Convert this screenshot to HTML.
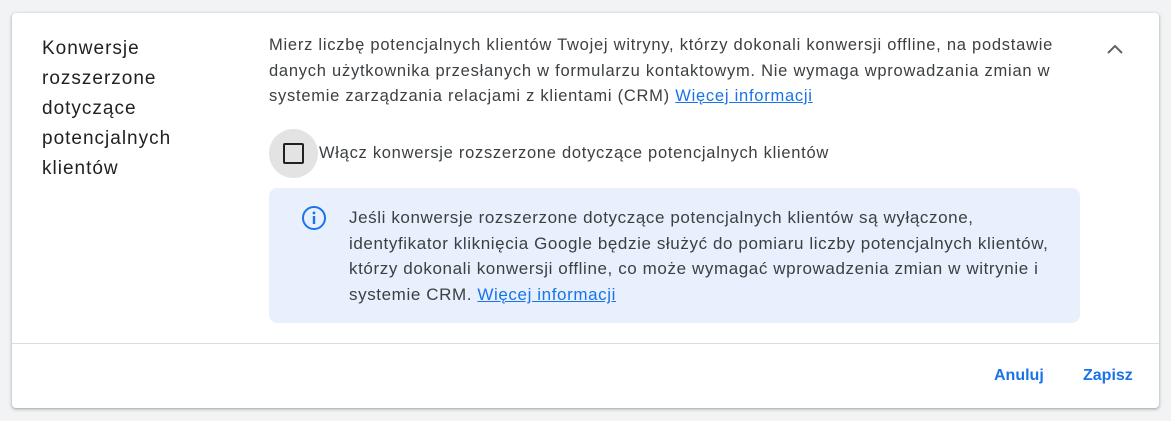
<!DOCTYPE html>
<html><head><meta charset="utf-8"><style>
body{margin:0;width:1171px;height:421px;background:#f1f3f4;font-family:"Liberation Sans",Arial,sans-serif;position:relative;overflow:hidden}
.card{position:absolute;left:12px;top:13px;width:1147px;height:395px;background:#fff;border-radius:4px;box-shadow:0 1px 2px rgba(60,64,67,.3),0 1px 3px 1px rgba(60,64,67,.15)}
.title{position:absolute;left:30px;top:21px;font-size:19px;letter-spacing:1px;line-height:30px;color:#202124;white-space:nowrap}
.desc{position:absolute;left:257px;top:20px;font-size:16.5px;letter-spacing:0.75px;line-height:25.5px;color:#3c4043;white-space:nowrap}
a{color:#1a73e8;text-decoration:underline}
.cbc{position:absolute;left:257px;top:116px;width:49px;height:49px;border-radius:50%;background:#e3e3e3}
.cb{position:absolute;left:271px;top:130px;width:17px;height:17px;border:2.5px solid #202124;border-radius:2px}
.cbl{position:absolute;left:307px;top:131px;font-size:16.5px;letter-spacing:0.72px;color:#3c4043;white-space:nowrap}
.info{position:absolute;left:257px;top:175px;width:811px;height:135px;background:#e8f0fe;border-radius:8px}
.info svg{position:absolute;left:32px;top:17px}
.itxt{position:absolute;left:80px;top:17px;font-size:17px;letter-spacing:0.6px;line-height:25.7px;color:#3c4043;white-space:nowrap}
.div{position:absolute;left:0;right:0;top:330px;border-top:1px solid #dadce0}
.btn{position:absolute;top:354px;font-size:16px;font-weight:bold;color:#1a73e8}
</style></head><body>
<div class="card">
<div class="title">Konwersje<br>rozszerzone<br>dotyczące<br>potencjalnych<br>klientów</div>
<div class="desc">Mierz liczbę potencjalnych klientów Twojej witryny, którzy dokonali konwersji offline, na podstawie<br>danych użytkownika przesłanych w formularzu kontaktowym. Nie wymaga wprowadzania zmian w<br>systemie zarządzania relacjami z klientami (CRM) <a>Więcej informacji</a></div>
<svg style="position:absolute;left:1091px;top:24px" width="24" height="24" viewBox="0 0 24 24"><path d="M5 16l7-7 7 7" fill="none" stroke="#5f6368" stroke-width="2"/></svg>
<div class="cbc"></div><div class="cb"></div>
<div class="cbl">Włącz konwersje rozszerzone dotyczące potencjalnych klientów</div>
<div class="info">
<svg width="26" height="26" viewBox="0 0 26 26"><circle cx="13" cy="13" r="11" fill="none" stroke="#1a73e8" stroke-width="2"/><circle cx="13" cy="8" r="1.4" fill="#1a73e8"/><rect x="11.8" y="11" width="2.4" height="8" fill="#1a73e8"/></svg>
<div class="itxt">Jeśli konwersje rozszerzone dotyczące potencjalnych klientów są wyłączone,<br>identyfikator kliknięcia Google będzie służyć do pomiaru liczby potencjalnych klientów,<br>którzy dokonali konwersji offline, co może wymagać wprowadzenia zmian w witrynie i<br>systemie CRM. <a>Więcej informacji</a></div>
</div>
<div class="div"></div>
<div class="btn" style="left:982px">Anuluj</div>
<div class="btn" style="left:1071px">Zapisz</div>
</div>
</body></html>
